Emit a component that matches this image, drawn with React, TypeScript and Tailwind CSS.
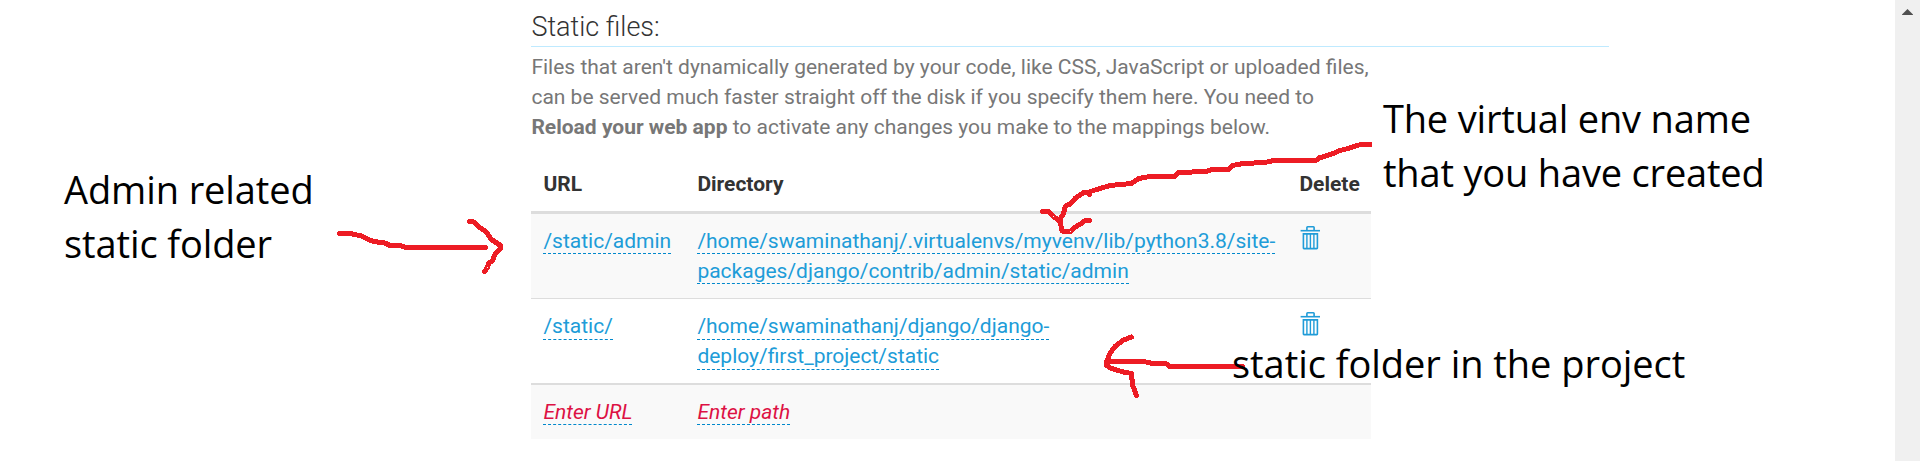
import type { ReactNode } from 'react';

function Trash() {
  return (
    <svg className="block h-6 w-6" viewBox="0 0 24 24" fill="none" stroke="#209cd8">
      <path d="M7.9 4V1.5q0-.7.7-.7h5.8q.7 0 .7.7V4" strokeWidth="1.6" />
      <path d="M1.6 4.7h19.4" strokeWidth="1.6" />
      <path d="M4.4 7.9h14v14.1q0 .6-.6.6H5q-.6 0-.6-.6z" strokeWidth="1.6" />
      <path d="M7.9 8v15M11.4 8v15M14.9 8v15" strokeWidth="1.4" />
    </svg>
  );
}

function Editable({ children, empty = false, low = false }: { children: ReactNode; empty?: boolean; low?: boolean }) {
  return (
    <a
      className={`border-b border-dashed border-[#0088cc] ${empty ? 'text-[#dd1144] italic' : 'text-[#209cd8]'} ${low ? 'pb-px' : ''}`}
    >
      {children}
    </a>
  );
}

function Note({ className, lines }: { className: string; lines: string[] }) {
  return (
    <div
      className={`absolute font-['Open_Sans',sans-serif] text-[38px] leading-[54px] whitespace-nowrap text-black ${className}`}
    >
      {lines.map((line) => (
        <div key={line}>{line}</div>
      ))}
    </div>
  );
}

const strokes = [
  '339.5,233.5 350,233.5 361.5,236 368.5,239.5 373.5,241.5 385,243 390,245.5 401.5,246 406,247.5 485.5,247.5',
  '469.5,221.5 474,222 478.5,226.5 486.5,232 491.5,239.5 500.5,245.5 500.5,248.5 495,254 492.5,260.5 488.5,263.5 487.5,267.5 484.5,271.5',
  '1370,144.5 1360.5,144.5 1348,148.5 1338,151 1333.5,153.5 1326.5,155.5 1323,157 1319.5,157.5 1316,160.5 1273.5,160.5 1265,162.5 1243,163.5 1232.5,165.5 1228.5,169.5 1211.5,169.5 1206.5,171.5 1178.5,172.5 1174.5,176.5 1150,176.5 1138.5,178.5 1131.5,183.5 1110,185.5 1096.5,189.5 1089,192 1083.5,192.5 1075,198.5 1070,204 1065.5,206 1063.5,213.5 1060.5,218.5 1061,226 1062,231 1070.5,231.5 1074,228 1082,223 1085,220.5 1089.5,220.5',
  '1089.5,192 1089.5,194.5',
  '1042.5,211.5 1048.5,211.5 1053.5,216.5 1059.5,221',
  '1242.5,366.5 1170,366.5 1166,363.5 1153,363.5 1143.5,361.5 1108,361.5',
  '1131.5,337 1123.5,340 1115,346.5 1110,353.5 1108,358.5 1106,362.5 1106,365 1111.5,368.5 1123.5,372 1131.5,373.5 1132.5,385 1135,391.5 1136.5,395.5',
];

export default function App() {
  return (
    <div className="relative flex h-[461px] w-[1920px] justify-between overflow-hidden bg-white font-[Roboto,sans-serif] text-[21px] leading-[30px] text-[#333]">
      <main className="ml-[531.4px] w-[1078px] pt-2">
        <h2 className="mb-[5px] h-[39px] border-b border-[#bfeaff] text-[27px] leading-[39px] font-light">
          Static files:
        </h2>
        <p className="mb-[15px] w-[840px] whitespace-nowrap text-[#777]">
          Files that aren't dynamically generated by your code, like CSS, JavaScript or uploaded files,
          <br />
          can be served much faster straight off the disk if you specify them here. You need to
          <br />
          <b className="font-bold">Reload your web app</b> to activate any changes you make to the mappings below.
        </p>
        <table className="w-[840px] table-fixed border-separate border-spacing-0 text-left align-top">
          <colgroup>
            <col className="w-[154px]" />
            <col className="w-[602px]" />
            <col className="w-[84px]" />
          </colgroup>
          <thead>
            <tr>
              <th className="p-3 font-bold">URL</th>
              <th className="p-3 font-bold">Directory</th>
              <th className="p-3 font-bold">Delete</th>
            </tr>
          </thead>
          <tbody>
            <tr className="bg-[#f9f9f9] align-top">
              <td className="border-t-3 border-[#ddd] p-3">
                <Editable>/static/admin</Editable>
              </td>
              <td className="border-t-3 border-[#ddd] p-3">
                <Editable>
                  /home/swaminathanj/.virtualenvs/myvenv/lib/python3.8/site-
                  <br />
                  packages/django/contrib/admin/static/admin
                </Editable>
              </td>
              <td className="border-t-3 border-[#ddd] p-3">
                <Trash />
              </td>
            </tr>
            <tr className="align-top">
              <td className="border-t border-[#ddd] p-3">
                <Editable low>/static/</Editable>
              </td>
              <td className="border-t border-[#ddd] p-3">
                <Editable low>
                  /home/swaminathanj/django/django-
                  <br />
                  deploy/first_project/static
                </Editable>
              </td>
              <td className="border-t border-[#ddd] px-3 pt-[13px] pb-[11px]">
                <Trash />
              </td>
            </tr>
            <tr className="bg-[#f9f9f9] align-top">
              <td className="border-t-2 border-[#ddd] p-3">
                <Editable empty>Enter URL</Editable>
              </td>
              <td className="border-t-2 border-[#ddd] p-3">
                <Editable empty>Enter path</Editable>
              </td>
              <td className="border-t-2 border-[#ddd] p-3" />
            </tr>
          </tbody>
        </table>
      </main>
      <aside className="flex w-[25px] justify-center bg-[#f0f0f0] pt-[9px]">
        <svg className="h-1.5 w-[11px]" viewBox="0 0 11 6" fill="#505050">
          <path d="M5.5 0L11 5.4V6H0V5.4z" />
        </svg>
      </aside>
      <svg
        className="pointer-events-none absolute top-0 left-0"
        width="1920"
        height="461"
        fill="none"
        stroke="#ed1c24"
        strokeWidth="5"
        strokeLinecap="round"
        strokeLinejoin="round"
        shapeRendering="crispEdges"
      >
        {strokes.map((points) => (
          <polyline key={points} points={points} />
        ))}
      </svg>
      <Note className="top-[162px] left-16 tracking-[-0.1px]" lines={['Admin related', 'static folder']} />
      <Note
        className="top-[91px] left-[1383px] tracking-[-0.18px]"
        lines={['The virtual env name', 'that you have created']}
      />
      <Note className="top-[336px] left-[1232px] tracking-[-0.04px]" lines={['static folder in the project']} />
    </div>
  );
}
